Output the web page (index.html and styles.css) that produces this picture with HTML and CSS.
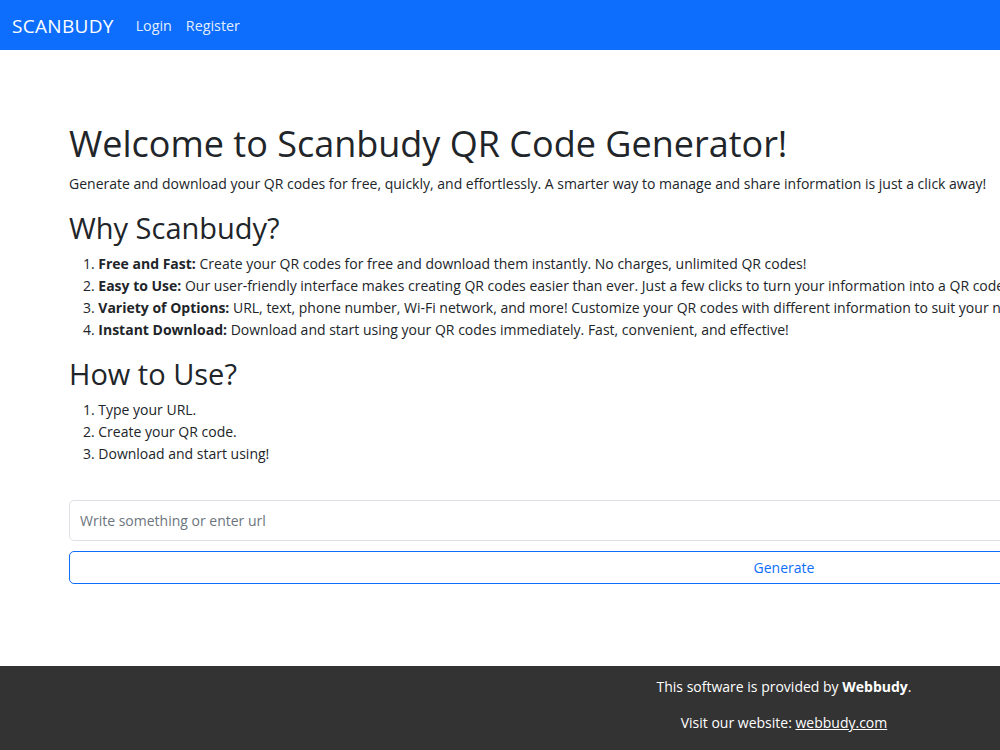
FILE: index.html
```html
<!DOCTYPE html>
<html lang="en">
    <head>
        <meta name="viewport" content="width=device-width, initial-scale=1">
        <title>Scanbudy QR Code Generator</title>
        <link rel="stylesheet" href="styles.css">
    </head>
    <body>
        <div class="page">
            <nav class="topbar">
                <a class="brand" href="#">SCANBUDY</a>
                <a class="nav-link" href="#">Login</a>
                <a class="nav-link" href="#">Register</a>
            </nav>
            <main class="content">
                <h1>Welcome to Scanbudy QR Code Generator!</h1>
                <p>Generate and download your QR codes for free, quickly, and effortlessly. A smarter way to manage and share information is just a click away!</p>
                <h2>Why Scanbudy?</h2>
                <ol>
                    <li><strong>Free and Fast:</strong> Create your QR codes for free and download them instantly. No charges, unlimited QR codes!</li>
                    <li><strong>Easy to Use:</strong> Our user-friendly interface makes creating QR codes easier than ever. Just a few clicks to turn your information into a QR code!</li>
                    <li><strong>Variety of Options:</strong> URL, text, phone number, Wi-Fi network, and more! Customize your QR codes with different information to suit your needs.</li>
                    <li><strong>Instant Download:</strong> Download and start using your QR codes immediately. Fast, convenient, and effective!</li>
                </ol>
                <h2>How to Use?</h2>
                <ol>
                    <li>Type your URL.</li>
                    <li>Create your QR code.</li>
                    <li>Download and start using!</li>
                </ol>
                <form class="qr-form">
                    <input type="text" name="text" placeholder="Write something or enter url">
                    <button type="submit">Generate</button>
                </form>
            </main>
            <footer class="site-footer">
                <p>This software is provided by <strong>Webbudy</strong>.</p>
                <p>Visit our website: <a href="#">webbudy.com</a></p>
            </footer>
        </div>
    </body>
</html>
```

FILE: styles.css
```css
html, body {
    padding: 0;
    margin: 0;
    overflow: hidden;
}
* {
    box-sizing: border-box;
}
/* the layout is wider than the window, the rest is cut off */
.page {
    width: 1568px;
    font-family: "Open Sans", sans-serif;
    font-size: 14px;
    line-height: 22px;
    color: #212529;
}
.topbar {
    height: 50px;
    background-color: #0d6efd;
    display: flex;
    align-items: center;
    padding: 1px 12px 0;
}
.topbar a {
    text-decoration: none;
}
.brand {
    color: #fff;
    font-size: 19px;
    letter-spacing: 0.3px;
    margin-right: 15px;
}
.nav-link {
    color: rgba(255, 255, 255, 0.9);
    font-size: 14.3px;
    padding: 0 7px;
}
.content {
    padding: 72px 69px 0;
}
h1, h2 {
    font-weight: 500;
    margin: 0 0 7px;
}
h1 {
    font-size: 36px;
    line-height: 44px;
}
h2 {
    font-size: 29px;
    line-height: 36px;
}
p, ol {
    margin: 0 0 15px;
}
ol {
    padding-left: 29.3px;
}
strong {
    font-weight: 700;
}
.qr-form {
    display: flex;
    flex-direction: column;
    gap: 10px;
    margin-top: 35px;
}
.qr-form input {
    height: 41px;
    border: 1px solid #dee2e6;
    border-radius: 5px;
    padding: 0 10px;
    font: inherit;
    color: #212529;
}
.qr-form input::placeholder {
    color: #6c757d;
}
.qr-form button {
    height: 33px;
    border: 1px solid #0d6efd;
    border-radius: 5px;
    background: #fff;
    color: #0d6efd;
    font: inherit;
}
.site-footer {
    margin-top: 82px;
    height: 84px;
    background-color: #333;
    color: #fff;
    text-align: center;
    padding-top: 10px;
}
.site-footer p {
    margin: 0 0 14px;
}
.site-footer a {
    color: #fff;
}
```
